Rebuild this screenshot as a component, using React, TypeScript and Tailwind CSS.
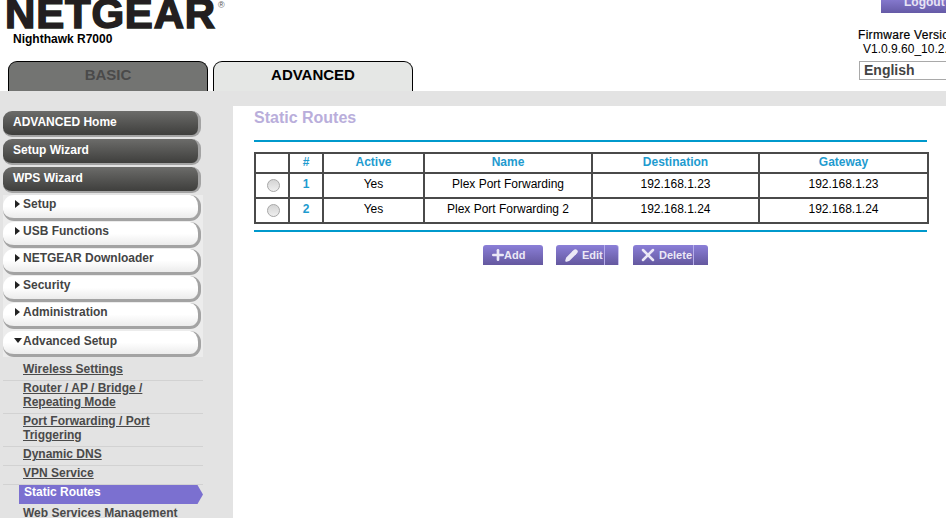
import { Pencil, Plus, X } from 'lucide-react';

const darkItems = ['ADVANCED Home', 'Setup Wizard', 'WPS Wizard'];
const lightItems = ['Setup', 'USB Functions', 'NETGEAR Downloader', 'Security', 'Administration'];
const subItems = [
  ['Wireless Settings'],
  ['Router / AP / Bridge /', 'Repeating Mode'],
  ['Port Forwarding / Port', 'Triggering'],
  ['Dynamic DNS'],
  ['VPN Service'],
];

const routes = [
  { id: 1, name: 'Plex Port Forwarding', dest: '192.168.1.23', gateway: '192.168.1.23' },
  { id: 2, name: 'Plex Port Forwarding 2', dest: '192.168.1.24', gateway: '192.168.1.24' },
];

const cell = 'border-2 border-[#4a4a4a] pb-[2px] text-center';
const bodyCell = 'border-2 border-[#4a4a4a] pb-[3px] text-center';

function Header() {
  return (
    <div className="flex h-[91px] justify-between overflow-hidden bg-white">
      <div className="flex flex-col">
        <div className="relative h-[31px] shrink-0 pl-[5px]">
          <div className="mt-[-2px] text-[42px] leading-[31px] font-bold tracking-[0.8px] whitespace-nowrap text-[#231f20] [-webkit-text-stroke:1.5px_#231f20]">
            NETGEAR
          </div>
          <span className="absolute top-0 left-[218px] text-[9px] leading-[10px] text-[#555]">®</span>
        </div>
        <div className="shrink-0 pt-[1px] pl-[13px] text-xs leading-[14px] font-bold text-black">Nighthawk R7000</div>
        <div className="mt-[15px] flex shrink-0 gap-[5px] pl-[8px]">
          <div className="flex h-[31px] w-[200px] items-center justify-center rounded-t-[9px] border-x border-t border-black bg-[#737472] pb-[3px] text-[15px] font-bold text-[#4a4a4a]">
            BASIC
          </div>
          <div className="flex h-[31px] w-[200px] items-center justify-center rounded-t-[9px] border-x border-t border-black bg-[#e5e7e5] pb-[3px] text-[15px] font-bold text-black">
            ADVANCED
          </div>
        </div>
      </div>
      <div className="flex w-[88px] shrink-0 flex-col">
        <div className="ml-[23px] flex h-[13px] w-[65px] items-end overflow-hidden bg-gradient-to-b from-[#8478cc] to-[#655aa6] pl-[23px] text-xs leading-[13px] font-bold text-[#e8e4f4]">
          <span className="mb-[4px]">Logout</span>
          <span className="ml-[1px] h-full w-px shrink-0 bg-[#b6aeea]" />
        </div>
        <div className="mt-[14px] pt-[1px] text-xs leading-[14px] font-normal tracking-[0.3px] whitespace-nowrap text-black [-webkit-text-stroke:0.2px_black]">
          Firmware Version
        </div>
        <div className="pl-[5px] text-xs leading-[14px] whitespace-nowrap text-black">V1.0.9.60_10.2.60</div>
        <div className="mt-[5px] ml-[1px] flex h-[19px] w-[100px] shrink-0 items-center border border-[#a9a9a9] pb-[1px] pl-[4px] text-sm font-bold text-[#444]">
          English
        </div>
      </div>
    </div>
  );
}

function Sidebar() {
  return (
    <div className="flex h-[412px] w-[233px] shrink-0 flex-col overflow-hidden bg-[#e3e3e3] pt-[5px] pl-[3px]">
      {darkItems.map((item) => (
        <div
          key={item}
          className="mb-[2px] flex h-[26px] w-[198px] shrink-0 items-center rounded-[9px] border-r-[3px] border-b-[2px] border-[#a3a3a3] bg-gradient-to-b from-[#6c6c6a] to-[#3f3f3d] pb-[2px] pl-[10px] text-xs font-bold text-white"
        >
          {item}
        </div>
      ))}
      <div className="w-[200px] shrink-0 bg-[#ececec]">
        {lightItems.map((item) => (
          <div
            key={item}
            className="mb-[1px] flex h-[26px] w-[198px] items-center gap-[3px] rounded-[11px] border-r-[3px] border-b-[3px] border-[#a3a3a3] bg-gradient-to-b from-white via-white to-[#ececec] pb-[6px] pl-[12px] text-xs font-bold text-[#444]"
          >
            <span className="h-0 w-0 border-y-[4px] border-l-[5px] border-y-transparent border-l-[#222]" />
            {item}
          </div>
        ))}
        <div className="mt-[2px] flex h-[26px] w-[198px] items-center gap-[1px] rounded-[11px] border-r-[3px] border-b-[3px] border-[#a3a3a3] bg-gradient-to-b from-white via-white to-[#ececec] pb-[4px] pl-[11px] text-xs font-bold text-[#444]">
          <span className="h-0 w-0 border-x-[4px] border-t-[5px] border-x-transparent border-t-[#222]" />
          Advanced Setup
        </div>
      </div>
      <div className="mt-[2px] w-[200px] shrink-0">
        {subItems.map((lines, i) => (
          <div
            key={lines[0]}
            className={`border-b border-[#d2d2d2] pl-[20px] text-xs font-bold text-[#4a4a4a] underline ${i === 0 ? 'pt-[3px] pb-[4px]' : 'pb-[4px]'}`}
          >
            {lines.map((line) => (
              <div key={line} className="leading-[14px]">
                {line}
              </div>
            ))}
          </div>
        ))}
        <div className="ml-[16px] flex h-[19px] w-[184px] items-center bg-[#7b70d0] pb-[6px] pl-[5px] text-xs font-bold text-white [clip-path:polygon(0_0,97%_0,100%_50%,97%_100%,0_100%)]">
          Static Routes
        </div>
        <div className="mt-[2px] pl-[20px] text-xs leading-[14px] font-bold whitespace-nowrap text-[#4a4a4a]">
          Web Services Management
        </div>
      </div>
    </div>
  );
}

function RouteTable() {
  return (
    <table className="w-[673px] table-fixed border-collapse text-xs">
      <colgroup>
        <col className="w-[34px]" />
        <col className="w-[34px]" />
        <col className="w-[101px]" />
        <col className="w-[168px]" />
        <col className="w-[167px]" />
        <col className="w-[169px]" />
      </colgroup>
      <thead>
        <tr className="h-[19px] font-bold text-[#1e9bcf]">
          <th className={cell} />
          <th className={cell}>#</th>
          <th className={cell}>Active</th>
          <th className={cell}>Name</th>
          <th className={cell}>Destination</th>
          <th className={cell}>Gateway</th>
        </tr>
      </thead>
      <tbody>
        {routes.map((route) => (
          <tr key={route.id} className="h-[25px] text-black">
            <td className={bodyCell}>
              <span className="mt-[2px] ml-[11px] block h-[13px] w-[13px] rounded-full border border-[#a8a8a8] bg-gradient-to-b from-[#d4d4d4] to-[#efefef]" />
            </td>
            <td className={`${bodyCell} font-bold text-[#1e9bcf]`}>{route.id}</td>
            <td className={bodyCell}>Yes</td>
            <td className={bodyCell}>{route.name}</td>
            <td className={bodyCell}>{route.dest}</td>
            <td className={bodyCell}>{route.gateway}</td>
          </tr>
        ))}
      </tbody>
    </table>
  );
}

function ActionButtons() {
  const btn =
    'flex h-[20px] items-center rounded-t-[3px] bg-gradient-to-b from-[#8b7fd8] to-[#64589f] text-[11px] font-bold text-[#ebe8f6]';
  return (
    <div className="mt-[13px] flex pl-[229px]">
      <div className={`${btn} w-[60px] pl-[8px]`}>
        <Plus size={16} strokeWidth={4} className="mx-[-1px]" />
        <span className="ml-[-1px]">Add</span>
      </div>
      <div className={`${btn} ml-[13px] w-[63px] border-r border-[#c9c3ee] pl-[9px]`}>
        <Pencil size={13} strokeWidth={3} fill="#ebe8f6" />
        <span className="ml-[4px]">Edit</span>
        <span className="ml-[1px] h-full w-px bg-[#b6aeea]" />
      </div>
      <div className={`${btn} ml-[14px] w-[75px] pl-[5px]`}>
        <X size={20} strokeWidth={3} className="shrink-0" />
        <span className="ml-[1px]">Delete</span>
        <span className="ml-[1px] h-full w-px bg-[#b6aeea]" />
      </div>
    </div>
  );
}

export default function App() {
  return (
    <div className="h-[518px] w-[946px] overflow-hidden bg-white font-['Liberation_Sans',Arial,sans-serif]">
      <Header />
      <div className="h-[15px] bg-[#e3e3e3]" />
      <div className="flex">
        <Sidebar />
        <div className="flex-1 pl-[21px]">
          <h1 className="pt-[3px] text-base leading-[18px] font-bold text-[#b9aedb]">Static Routes</h1>
          <div className="mt-[13px] h-[2px] w-[673px] bg-[#0099cc]" />
          <div className="mt-[10px]">
            <RouteTable />
          </div>
          <div className="mt-[6px] h-[2px] w-[673px] bg-[#0099cc]" />
          <ActionButtons />
        </div>
      </div>
    </div>
  );
}
